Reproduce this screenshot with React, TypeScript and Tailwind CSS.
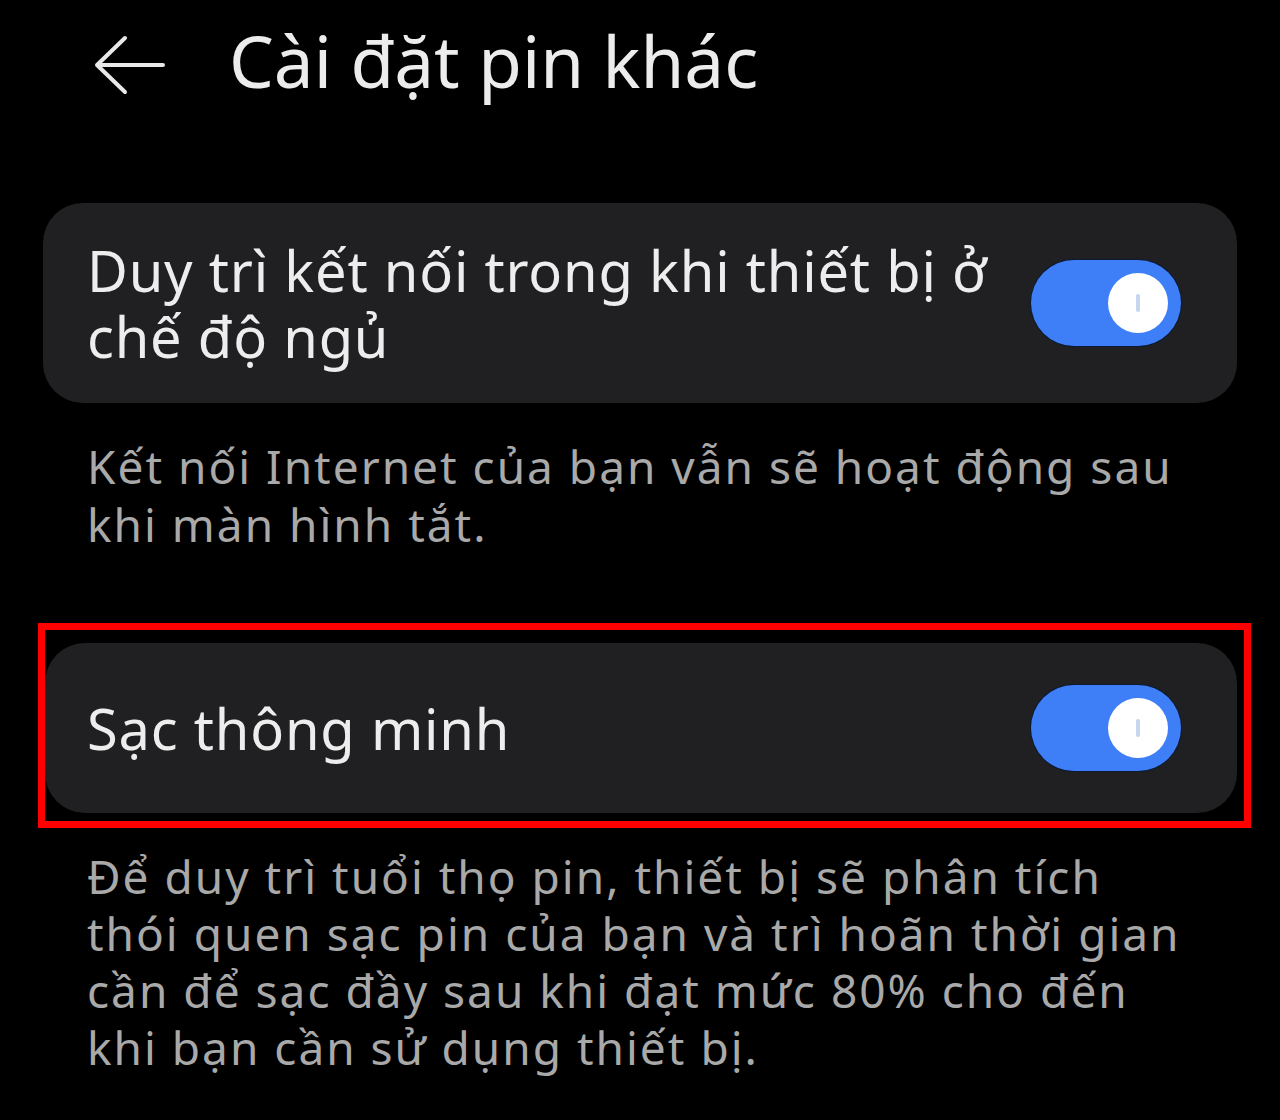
import React from "react";

function Toggle() {
  return (
    <div className="relative flex h-[86px] w-[150px] shrink-0 items-center justify-end rounded-full bg-[#3e7ef6] pr-[13px] shadow-[0_0_0_1px_#0b1a33]">
      <div className="flex h-[60px] w-[60px] items-center justify-center rounded-full bg-white">
        <div className="h-[18px] w-[4px] rounded-full bg-[#c6d6ee]" />
      </div>
    </div>
  );
}

function BackArrow() {
  return (
    <svg width="72" height="60" viewBox="0 0 72 60" fill="none" className="mt-[35px] shrink-0">
      <path
        d="M69 30H3M31 3L3 30L31 57"
        stroke="#e9e9e9"
        strokeWidth="4"
        strokeLinecap="round"
        strokeLinejoin="round"
      />
    </svg>
  );
}

export default function App() {
  return (
    <div
      className="h-[1120px] w-[1280px] overflow-hidden bg-black"
      style={{ fontFamily: '"Noto Sans", "Open Sans", sans-serif' }}
    >
      {/* header */}
      <div className="flex h-[130px] items-start gap-[63px] pl-[94px]">
        <BackArrow />
        <h1 className="mt-[21px] text-[71px] leading-[80px] font-normal text-[#ececec]">Cài đặt pin khác</h1>
      </div>

      {/* keep-alive card */}
      <div className="mx-[43px] mt-[73px] flex h-[200px] items-center justify-between rounded-[40px] bg-[#202022] pr-[56px] pl-[44px]">
        <p className="text-[56px] leading-[66px] tracking-[0.8px] whitespace-nowrap text-[#ededed]">
          Duy trì kết nối trong khi thiết bị ở
          <br />
          chế độ ngủ
        </p>
        <Toggle />
      </div>
      <p className="mt-[34px] px-[87px] text-[46px] leading-[58px] tracking-[2px] whitespace-nowrap text-[#a9a9a9]">
        Kết nối Internet của bạn vẫn sẽ hoạt động sau
        <br />
        khi màn hình tắt.
      </p>

      {/* smart charging card, outlined */}
      <div className="mt-[70px] mr-[29px] ml-[38px] border-[7px] border-[#ff0000] pt-[13px] pr-[7px] pb-[8px]">
        <div className="flex h-[170px] items-center justify-between rounded-[40px] bg-[#202022] pr-[56px] pl-[42px]">
          <p className="text-[56px] leading-[66px] tracking-[0.8px] whitespace-nowrap text-[#ededed]">Sạc thông minh</p>
          <Toggle />
        </div>
      </div>
      <p className="mt-[20px] px-[87px] text-[46px] leading-[57px] tracking-[2px] whitespace-nowrap text-[#a9a9a9]">
        Để duy trì tuổi thọ pin, thiết bị sẽ phân tích
        <br />
        thói quen sạc pin của bạn và trì hoãn thời gian
        <br />
        cần để sạc đầy sau khi đạt mức 80% cho đến
        <br />
        khi bạn cần sử dụng thiết bị.
      </p>
    </div>
  );
}
